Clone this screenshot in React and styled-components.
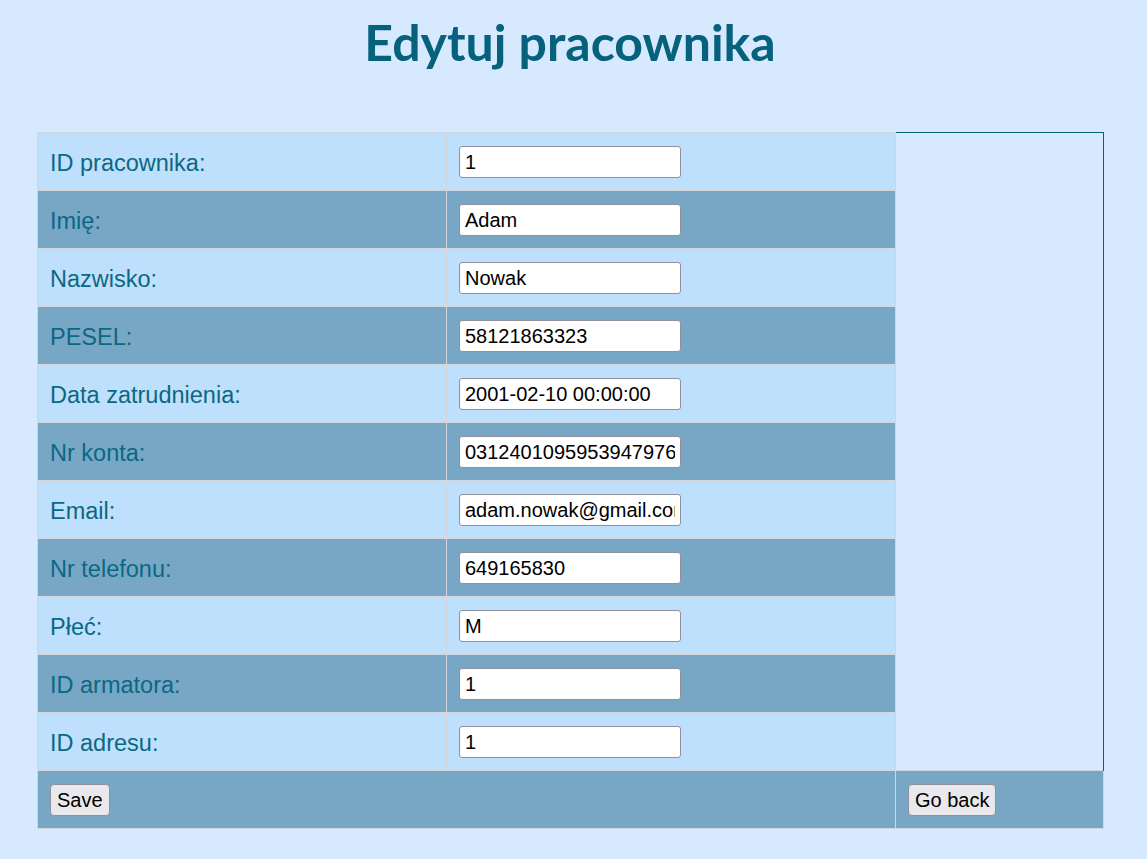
import styled, { createGlobalStyle } from "styled-components";

const GlobalStyle = createGlobalStyle`
  body {
    margin: 0;
    background: #d6e9fe;
    font-family: "Liberation Sans", Arial, sans-serif;
  }
`;

const Page = styled.div`
  padding: 12px 44px 30px 37px;
`;

const Title = styled.h1`
  margin: 0 0 60px;
  text-align: center;
  font-family: "Lato", "Liberation Sans", sans-serif;
  font-weight: 700;
  font-size: 50px;
  line-height: 60px;
  color: #06617d;
`;

const Table = styled.table`
  width: 1066px;
  border-collapse: collapse;
  table-layout: fixed;
`;

const Row = styled.tr`
  background: ${(p) => (p.$dark ? "#78a7c6" : "#bfe0fd")};
`;

const Cell = styled.td`
  height: 58px;
  padding: 0 12px;
  border: 1px solid #d2d6da;
  box-sizing: border-box;
  vertical-align: middle;
`;

const Label = styled(Cell)`
  padding: 3px 12px 0;
  font-size: 23.5px;
  color: #0b6883;
`;

const Side = styled.td`
  padding: 0;
  background: #d6e9fe;
  border-top: 1px solid #06607a;
  border-right: 1px solid #06607a;
  border-left: 1px solid #d2d6da;
`;

const Field = styled.input`
  box-sizing: border-box;
  width: 222px;
  height: 32px;
  padding: 1px 5px 0;
  border: 1px solid #8f8f9d;
  border-radius: 3px;
  background: #fff;
  font-family: "Liberation Sans", Arial, sans-serif;
  font-size: 20px;
  color: #000;
`;

const Button = styled.button`
  height: 32px;
  padding: 1px 6px 0;
  border: 1px solid #8f8f9d;
  border-radius: 4px;
  background: #e9e9ed;
  font-family: "Liberation Sans", Arial, sans-serif;
  font-size: 20px;
  color: #000;
`;

const fields = [
  ["ID pracownika:", "1"],
  ["Imię:", "Adam"],
  ["Nazwisko:", "Nowak"],
  ["PESEL:", "58121863323"],
  ["Data zatrudnienia:", "2001-02-10 00:00:00"],
  ["Nr konta:", "03124010959539479768"],
  ["Email:", "adam.nowak@gmail.com"],
  ["Nr telefonu:", "649165830"],
  ["Płeć:", "M"],
  ["ID armatora:", "1"],
  ["ID adresu:", "1"],
];

export default function App() {
  return (
    <>
      <GlobalStyle />
      <Page>
        <Title>Edytuj pracownika</Title>
        <form onSubmit={(e) => e.preventDefault()}>
          <Table>
            <colgroup>
              <col style={{ width: 409 }} />
              <col style={{ width: 449 }} />
              <col style={{ width: 208 }} />
            </colgroup>
            <tbody>
              {fields.map(([label, value], i) => (
                <Row key={label} $dark={i % 2 === 1}>
                  <Label>{label}</Label>
                  <Cell>
                    <Field type="text" defaultValue={value} />
                  </Cell>
                  {i === 0 && <Side rowSpan={fields.length} />}
                </Row>
              ))}
              <Row $dark>
                <Cell colSpan={2}>
                  <Button type="submit">Save</Button>
                </Cell>
                <Cell>
                  <Button type="button">Go back</Button>
                </Cell>
              </Row>
            </tbody>
          </Table>
        </form>
      </Page>
    </>
  );
}
